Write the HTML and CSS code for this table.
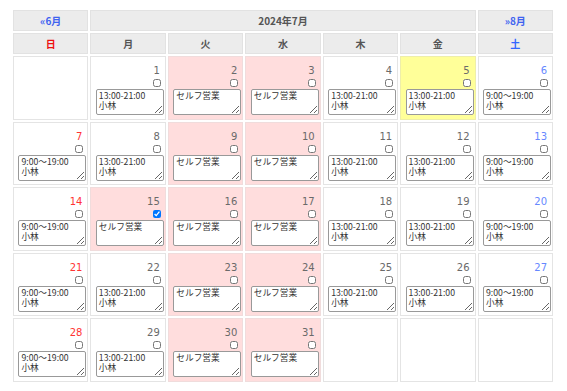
FILE: index.html
```html
<!DOCTYPE html>
<html lang="ja">
<head>
<meta charset="utf-8">
<link rel="stylesheet" href="styles.css">
</head>
<body>
<div class="cal">
  <div class="hd nav"><a href="#">«6月</a></div>
  <div class="hd title">2024年7月</div>
  <div class="hd nav"><a href="#">»8月</a></div>

  <div class="hd sun">日</div>
  <div class="hd">月</div>
  <div class="hd">火</div>
  <div class="hd">水</div>
  <div class="hd">木</div>
  <div class="hd">金</div>
  <div class="hd sat">土</div>

  <!-- week 1 -->
  <div class="day empty"></div>
  <div class="day"><span class="num">1</span><input type="checkbox"><textarea>13:00-21:00
小林</textarea></div>
  <div class="day pink"><span class="num">2</span><input type="checkbox"><textarea>セルフ営業</textarea></div>
  <div class="day pink"><span class="num">3</span><input type="checkbox"><textarea>セルフ営業</textarea></div>
  <div class="day"><span class="num">4</span><input type="checkbox"><textarea>13:00-21:00
小林</textarea></div>
  <div class="day today"><span class="num">5</span><input type="checkbox"><textarea>13:00-21:00
小林</textarea></div>
  <div class="day"><span class="num sat">6</span><input type="checkbox"><textarea>9:00〜19:00
小林</textarea></div>

  <!-- week 2 -->
  <div class="day"><span class="num sun">7</span><input type="checkbox"><textarea>9:00〜19:00
小林</textarea></div>
  <div class="day"><span class="num">8</span><input type="checkbox"><textarea>13:00-21:00
小林</textarea></div>
  <div class="day pink"><span class="num">9</span><input type="checkbox"><textarea>セルフ営業</textarea></div>
  <div class="day pink"><span class="num">10</span><input type="checkbox"><textarea>セルフ営業</textarea></div>
  <div class="day"><span class="num">11</span><input type="checkbox"><textarea>13:00-21:00
小林</textarea></div>
  <div class="day"><span class="num">12</span><input type="checkbox"><textarea>13:00-21:00
小林</textarea></div>
  <div class="day"><span class="num sat">13</span><input type="checkbox"><textarea>9:00〜19:00
小林</textarea></div>

  <!-- week 3 -->
  <div class="day"><span class="num sun">14</span><input type="checkbox"><textarea>9:00〜19:00
小林</textarea></div>
  <div class="day pink"><span class="num">15</span><input type="checkbox" checked><textarea>セルフ営業</textarea></div>
  <div class="day pink"><span class="num">16</span><input type="checkbox"><textarea>セルフ営業</textarea></div>
  <div class="day pink"><span class="num">17</span><input type="checkbox"><textarea>セルフ営業</textarea></div>
  <div class="day"><span class="num">18</span><input type="checkbox"><textarea>13:00-21:00
小林</textarea></div>
  <div class="day"><span class="num">19</span><input type="checkbox"><textarea>13:00-21:00
小林</textarea></div>
  <div class="day"><span class="num sat">20</span><input type="checkbox"><textarea>9:00〜19:00
小林</textarea></div>

  <!-- week 4 -->
  <div class="day"><span class="num sun">21</span><input type="checkbox"><textarea>9:00〜19:00
小林</textarea></div>
  <div class="day"><span class="num">22</span><input type="checkbox"><textarea>13:00-21:00
小林</textarea></div>
  <div class="day pink"><span class="num">23</span><input type="checkbox"><textarea>セルフ営業</textarea></div>
  <div class="day pink"><span class="num">24</span><input type="checkbox"><textarea>セルフ営業</textarea></div>
  <div class="day"><span class="num">25</span><input type="checkbox"><textarea>13:00-21:00
小林</textarea></div>
  <div class="day"><span class="num">26</span><input type="checkbox"><textarea>13:00-21:00
小林</textarea></div>
  <div class="day"><span class="num sat">27</span><input type="checkbox"><textarea>9:00〜19:00
小林</textarea></div>

  <!-- week 5 -->
  <div class="day"><span class="num sun">28</span><input type="checkbox"><textarea>9:00〜19:00
小林</textarea></div>
  <div class="day"><span class="num">29</span><input type="checkbox"><textarea>13:00-21:00
小林</textarea></div>
  <div class="day pink"><span class="num">30</span><input type="checkbox"><textarea>セルフ営業</textarea></div>
  <div class="day pink"><span class="num">31</span><input type="checkbox"><textarea>セルフ営業</textarea></div>
  <div class="day empty"></div>
  <div class="day empty"></div>
  <div class="day empty"></div>
</div>
</body>
</html>
```

FILE: styles.css
```css
* { box-sizing: border-box; }

body {
  margin: 10px 0 0 13px;
  background: #fff;
  font-family: "Noto Sans CJK JP", "Noto Sans", sans-serif;
}

.cal {
  width: 540px;
  display: grid;
  grid-template-columns: repeat(7, 1fr);
  grid-template-rows: 21px 21px repeat(5, 63.6px);
  gap: 2px;
}

.hd {
  background: #ececec;
  border: 1px solid #e2e2e2;
  display: flex;
  align-items: center;
  justify-content: center;
  font-size: 10px;
  font-weight: bold;
  color: #555;
}

.title { grid-column: span 5; }

.nav a {
  color: #3f63f0;
  text-decoration: none;
}

.hd.sun { color: #ee1111; }
.hd.sat { color: #3366ff; }

.day {
  border: 1px solid #e4e4e4;
  background: #fff;
  display: flex;
  flex-direction: column;
  align-items: flex-end;
  padding: 8px 1px 0 0;
}

.day.pink { background: #ffdddd; border-color: #f0dcdc; }
.day.today { background: #ffff99; border-color: #eeeeaa; }

.num {
  font-family: "DejaVu Sans", sans-serif;
  font-size: 10px;
  line-height: 12px;
  color: #6a6a6a;
  padding-right: 4px;
}

.num.sun { color: #f33; }
.num.sat { color: #6688ff; }

.day input[type="checkbox"] {
  width: 8px;
  height: 8px;
  margin: 2px 3px 0 0;
}

.day textarea {
  width: 68px;
  height: 26px;
  margin-top: 2px;
  padding: 1px 2px;
  border: 1px solid #999;
  border-radius: 2px;
  font-family: "Noto Sans CJK JP", sans-serif;
  font-size: 8.7px;
  line-height: 10px;
  color: #333;
  background: #fff;
  overflow: hidden;
}
```
